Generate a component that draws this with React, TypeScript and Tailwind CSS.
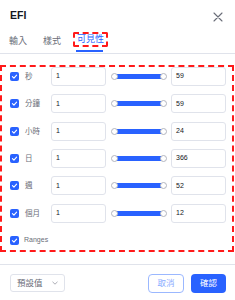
import React from "react";

const rows = [
  { label: "秒", max: "59" },
  { label: "分鐘", max: "59" },
  { label: "小時", max: "24" },
  { label: "日", max: "366" },
  { label: "週", max: "52" },
  { label: "個月", max: "12" },
];

function Check() {
  return (
    <div className="w-[9px] h-[9px] rounded-[2px] bg-[#2962ff] flex items-center justify-center shrink-0">
      <svg width="7" height="7" viewBox="0 0 10 10">
        <path d="M2 5.2 L4.2 7.3 L8 3" fill="none" stroke="white" strokeWidth="1.6" strokeLinecap="round" strokeLinejoin="round" />
      </svg>
    </div>
  );
}

function Slider() {
  return (
    <div className="relative w-[56px] h-[19px] flex items-center shrink-0">
      <div className="absolute left-[3px] right-[3px] h-[1px] bg-[#d1d4dc]" />
      <div className="absolute left-[5px] right-[5px] h-[5px] bg-[#2962ff]" />
      <div className="absolute left-0 w-[7px] h-[7px] rounded-full bg-white border border-[#b2b5be]" />
      <div className="absolute right-0 w-[7px] h-[7px] rounded-full bg-white border border-[#b2b5be]" />
    </div>
  );
}

function Field({ value }: { value: string }) {
  return (
    <div className="w-[55px] h-[19px] rounded-[3px] border border-[#e0e3eb] flex items-center pl-[4px] text-[7px] text-[#131722] shrink-0">
      {value}
    </div>
  );
}

export default function App() {
  return (
    <div
      className="w-[235px] h-[300px] bg-white flex flex-col overflow-hidden"
      style={{ fontFamily: '"Liberation Sans", "Noto Sans CJK TC", sans-serif' }}
    >
      <div className="h-[31px] flex items-center justify-between pl-[10px] pr-[12px] pt-[1px]">
        <span className="text-[10.5px] font-bold text-[#131722]">EFI</span>
        <svg width="10" height="10" viewBox="0 0 10 10" className="mt-[2px]">
          <path d="M1 1 L9 9 M9 1 L1 9" stroke="#6a6d78" strokeWidth="1.1" strokeLinecap="round" />
        </svg>
      </div>
      <div className="h-[23px] flex items-start border-b border-[#e0e3eb] pl-[9px] text-[9px]">
        <div className="h-full flex items-center text-[#6a6d78] mr-[16px] pb-[1px]">輸入</div>
        <div className="h-full flex items-center text-[#6a6d78] mr-[12px] pb-[1px]">樣式</div>
        <div className="relative h-full flex flex-col items-center">
          <div className="mt-[1px] px-[2px] h-[15px] border-2 border-dashed border-[#ff1a1a] rounded-[2px] flex items-center text-[#2962ff] leading-none">
            可見性
          </div>
          <div className="absolute bottom-[1px] left-[3px] right-[5px] h-[2px] bg-[#2962ff]" />
        </div>
      </div>
      <div className="mt-[11px] w-[234px] border-2 border-dashed border-[#ff1a1a] flex flex-col gap-[8.33px] pl-[8px] pr-[6px]">
        {rows.map((r) => (
          <div key={r.label} className="h-[19px] flex items-center">
            <Check />
            <div className="ml-[6px] w-[26px] text-[7.5px] text-[#6a6d78] shrink-0">{r.label}</div>
            <Field value="1" />
            <div className="ml-[5px]">
              <Slider />
            </div>
            <div className="ml-[4px]">
              <Field value={r.max} />
            </div>
          </div>
        ))}
        <div className="h-[19px] flex items-center">
          <Check />
          <div className="ml-[5px] text-[7px] text-[#6a6d78]">Ranges</div>
        </div>
      </div>
      <div className="mt-[12px] border-t border-[#e0e3eb] flex items-center justify-between pl-[10px] pr-[9px] pt-[9px]">
        <div className="w-[55px] h-[18px] rounded-[3px] border border-[#e0e3eb] flex items-center justify-between pl-[6px] pr-[6px] text-[8.5px] text-[#6a6d78]">
          <span>預設值</span>
          <svg width="6" height="4" viewBox="0 0 6 4">
            <path d="M0.5 0.8 L3 3.2 L5.5 0.8" fill="none" stroke="#9598a1" strokeWidth="0.8" />
          </svg>
        </div>
        <div className="flex items-center gap-[7px]">
          <div className="w-[36px] h-[19px] rounded-[4px] border border-[#9bb8ff] flex items-center justify-center text-[8.5px] text-[#8aabff]">
            取消
          </div>
          <div className="w-[35px] h-[19px] rounded-[4px] bg-[#2962ff] flex items-center justify-center text-[8.5px] text-white">
            確認
          </div>
        </div>
      </div>
    </div>
  );
}
